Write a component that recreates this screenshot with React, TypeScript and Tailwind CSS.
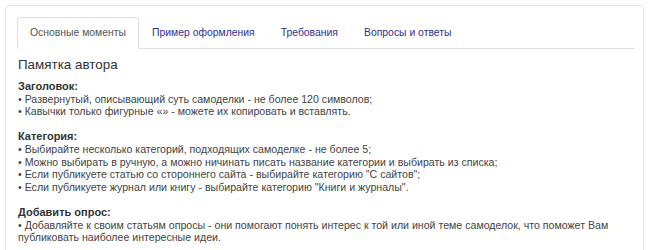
const tabs = ["Основные моменты", "Пример оформления", "Требования", "Вопросы и ответы"];

function Section({ title, lines }: { title: string; lines: React.ReactNode[] }) {
  return (
    <div className="mb-[12.6px]">
      <p className="text-[11px] font-bold text-[#333]">{title}</p>
      {lines.map((l, i) => (
        <p key={i}>{l}</p>
      ))}
    </div>
  );
}

export default function App() {
  return (
    <div className="h-[250px] w-[650px] overflow-hidden bg-white pl-[5px] pr-[6px] pt-[5px] font-['Liberation_Sans',Arial,sans-serif]">
      <div className="h-[260px] rounded-[4px] border border-[#e6e6e6] pl-[11px] pr-[8px] pt-[11px] shadow-[0_0_2px_rgba(0,0,0,0.04)]">
        <div className="flex border-b border-[#e2e2e2] text-[10.4px]">
          {tabs.map((t, i) => (
            <div
              key={t}
              className={
                i === 0
                  ? "-mb-px flex h-[32px] items-center rounded-t-[3px] border border-b-white border-[#e0e0e0] bg-white px-[12px] text-[#555]"
                  : "flex h-[31px] items-center px-[13px] text-[#30308f]"
              }
            >
              {t}
            </div>
          ))}
        </div>
        <div className="pl-[1px] text-[10.6px] leading-[12.6px] text-[#444]">
          <h2 className="mb-[6px] mt-[7px] text-[13.4px] leading-[18px] text-[#333]">Памятка автора</h2>
          <Section
            title="Заголовок:"
            lines={[
              "• Развернутый, описывающий суть самоделки - не более 120 символов;",
              "• Кавычки только фигурные «» - можете их копировать и вставлять.",
            ]}
          />
          <Section
            title="Категория:"
            lines={[
              "• Выбирайте несколько категорий, подходящих самоделке - не более 5;",
              "• Можно выбирать в ручную, а можно ничинать писать название категории и выбирать из списка;",
              "• Если публикуете статью со стороннего сайта - выбирайте категорию \"С сайтов\";",
              "• Если публикуете журнал или книгу - выбирайте категорию \"Книги и журналы\".",
            ]}
          />
          <Section
            title="Добавить опрос:"
            lines={[
              "• Добавляйте к своим статьям опросы - они помогают понять интерес к той или иной теме самоделок, что поможет Вам",
              "публиковать наиболее интересные идеи.",
            ]}
          />
        </div>
      </div>
    </div>
  );
}
